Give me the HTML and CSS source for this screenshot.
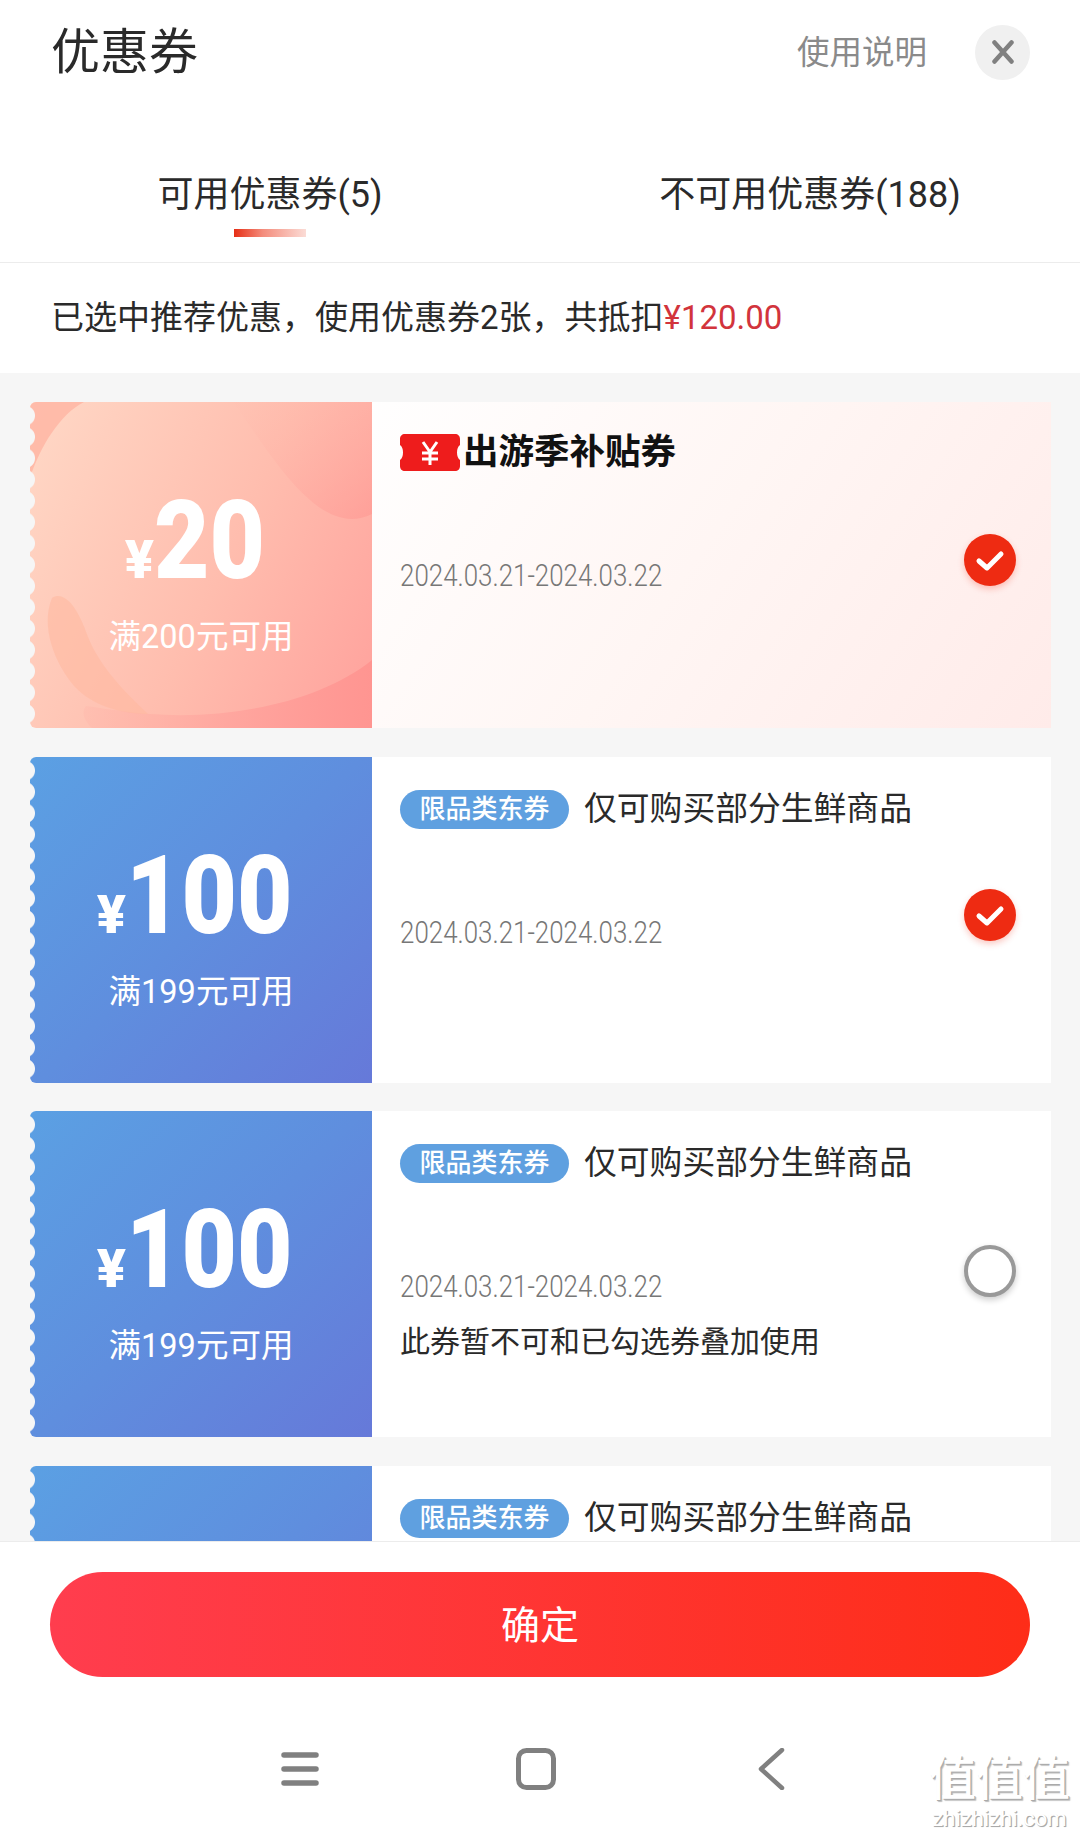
FILE: index.html
```html
<!DOCTYPE html>
<html lang="zh-CN">
<head>
<meta charset="utf-8">
<title>优惠券</title>
<link rel="stylesheet" href="styles.css">
</head>
<body>
<div class="screen">
  <header class="head">
    <div class="head-row">
      <h1 class="title">优惠券</h1>
      <span class="help">使用说明</span>
      <span class="close">
        <svg viewBox="0 0 24 24" width="24" height="24"><path d="M3.500 2.500L20.500 21.500M20.500 2.500L3.500 21.500" fill="none" stroke="#808080" stroke-width="4.500" stroke-linecap="round"/></svg>
      </span>
    </div>
    <div class="tabs">
      <div class="tab">可用优惠券(5)<i class="tab-bar"></i></div>
      <div class="tab">不可用优惠券(188)</div>
    </div>
    <p class="summary">已选中推荐优惠，使用优惠券2张，共抵扣<em class="sum-price">¥120.00</em></p>
  </header>

  <main class="list">
    <article class="coupon coupon-promo">
      <div class="left left-promo">
        <svg class="art" viewBox="0 0 342 326" preserveAspectRatio="none">
          <defs>
            <linearGradient id="swoosh" x1="0" y1="0" x2="1" y2="0">
              <stop offset="0" stop-color="#ffb0a6" stop-opacity=".25"/>
              <stop offset=".5" stop-color="#ff9e99" stop-opacity=".6"/>
              <stop offset="1" stop-color="#ff9591"/>
            </linearGradient>
            <linearGradient id="crest" x1="0" y1="0" x2="1" y2="1">
              <stop offset="0" stop-color="#ffb9ac" stop-opacity=".05"/>
              <stop offset="1" stop-color="#ff8f8b" stop-opacity=".45"/>
            </linearGradient>
          </defs>
          <path d="M0 0H54C30 12 10 45 0 76Z" fill="#ffb6a4" opacity=".85"/>
          <path d="M203 0C225 30 250 72 280 98C296 112 318 124 342 112V0Z" fill="url(#crest)"/>
          <path d="M342 258C290 300 200 318 120 312C95 310 70 306 56 304C50 312 56 320 62 326H342Z" fill="url(#swoosh)"/>
          <path d="M22 196C34 188 48 205 58 235C70 265 95 290 118 312C90 312 62 303 45 285C25 262 10 225 22 196Z" fill="#ffb89e" opacity=".55"/>
        </svg>
        <div class="price"><span class="yen">¥</span><span class="amount">20</span></div>
        <div class="cond">满200元可用</div>
      </div>
      <div class="right">
        <div class="info">
          <div class="brand">
            <svg class="ticket" viewBox="0 0 60 37" width="60" height="37"><path d="M5 0H55C58 0 60 2 60 5V11C56 13 56 24 60 26V32C60 35 58 37 55 37H5C2 37 0 35 0 32V26C4 24 4 13 0 11V5C0 2 2 0 5 0Z" fill="#ee1c1c"/><path d="M23 8L30 18L37 8M22 19H38M22 25H38M30 18V31" fill="none" stroke="#fff" stroke-width="3"/></svg>
            <span class="brand-name">出游季补贴券</span>
          </div>
          <div class="date">2024.03.21-2024.03.22</div>
        </div>
        <span class="check">
          <svg viewBox="0 0 52 52" width="52" height="52"><path d="M15 27L23 34L37 20" fill="none" stroke="#fff" stroke-width="5" stroke-linecap="round" stroke-linejoin="round"/></svg>
        </span>
      </div>
    </article>

    <article class="coupon">
      <div class="left left-blue">
        <div class="price"><span class="yen">¥</span><span class="amount amount-long">100</span></div>
        <div class="cond">满199元可用</div>
      </div>
      <div class="right">
        <div class="info">
          <div class="name-row"><span class="pill">限品类东券</span><span class="name">仅可购买部分生鲜商品</span></div>
          <div class="date">2024.03.21-2024.03.22</div>
        </div>
        <span class="check">
          <svg viewBox="0 0 52 52" width="52" height="52"><path d="M15 27L23 34L37 20" fill="none" stroke="#fff" stroke-width="5" stroke-linecap="round" stroke-linejoin="round"/></svg>
        </span>
      </div>
    </article>

    <article class="coupon">
      <div class="left left-blue">
        <div class="price"><span class="yen">¥</span><span class="amount amount-long">100</span></div>
        <div class="cond">满199元可用</div>
      </div>
      <div class="right">
        <div class="info">
          <div class="name-row"><span class="pill">限品类东券</span><span class="name">仅可购买部分生鲜商品</span></div>
          <div class="date">2024.03.21-2024.03.22</div>
          <div class="notice">此券暂不可和已勾选券叠加使用</div>
        </div>
        <span class="ring"></span>
      </div>
    </article>

    <article class="coupon">
      <div class="left left-blue"></div>
      <div class="right">
        <div class="info">
          <div class="name-row"><span class="pill">限品类东券</span><span class="name">仅可购买部分生鲜商品</span></div>
        </div>
      </div>
    </article>
  </main>

  <footer class="foot">
    <button class="confirm" type="button">确定</button>
    <nav class="nav">
      <svg viewBox="0 0 40 36" width="40" height="36"><path d="M4 4H36M4 18H36M4 32H36" fill="none" stroke="#808080" stroke-width="5.500" stroke-linecap="round"/></svg>
      <svg viewBox="0 0 40 42" width="40" height="42"><rect x="2.500" y="2.500" width="35" height="37" rx="8" fill="none" stroke="#808080" stroke-width="5"/></svg>
      <svg class="nav-back" viewBox="0 0 28 42" width="28" height="42"><path d="M25 2L4 21L25 40" fill="none" stroke="#808080" stroke-width="4.500" stroke-linecap="round" stroke-linejoin="round"/></svg>
    </nav>
  </footer>

  <div class="mark">
    <div class="mark-cn">值值值</div>
    <div class="mark-en">zhizhizhi.com</div>
  </div>
</div>
</body>
</html>
```
FILE: styles.css
```css
* { box-sizing: border-box; }
html, body { margin: 0; padding: 0; background: #fff; }
body { font-family: Roboto, "Noto Sans CJK SC", sans-serif; color: #2a2a2a; }

.screen {
  position: relative;
  width: 1080px;
  height: 1837px;
  display: flex;
  flex-direction: column;
  overflow: hidden;
  background: #fff;
}

/* header */
.head { flex: none; height: 373px; }
.head-row {
  height: 104px;
  padding: 0 50px 0 51px;
  display: flex;
  align-items: center;
}
.title { margin: 0; flex: 1; padding-top: 2px; font-size: 49px; font-weight: 400; line-height: 60px; }
.help { margin-right: 48px; padding-top: 2px; font-size: 32.500px; color: #8a8a8a; line-height: 44px; }
.close {
  width: 55px;
  height: 55px;
  border-radius: 50%;
  background: #f0f0f0;
  display: flex;
  align-items: center;
  justify-content: center;
}

.tabs {
  height: 159px;
  display: flex;
  border-bottom: 1px solid #ececec;
}
.tab {
  flex: 1;
  display: flex;
  flex-direction: column;
  align-items: center;
  padding-top: 61px;
  font-size: 36px;
  line-height: 60px;
}
.tab-bar {
  display: block;
  width: 72px;
  height: 8px;
  margin-top: 4px;
  background: linear-gradient(90deg, #e62f16 0%, #f48c7c 40%, #fbdcd6 100%);
}
.summary {
  margin: 0;
  height: 110px;
  padding-left: 51px;
  font-size: 33px;
  line-height: 110px;
}
.sum-price { font-style: normal; color: #d2343c; }

/* list */
.list {
  flex: 1;
  min-height: 0;
  overflow: hidden;
  background: #f6f6f6;
  padding: 29px 29px 0 30px;
  display: flex;
  flex-direction: column;
  gap: 28.700px;
}
.coupon {
  flex: none;
  height: 326px;
  display: flex;
  background: #fff;
  border-radius: 6px 0 0 6px;
}
.coupon-promo { background: linear-gradient(125deg, #fff 25%, #fff6f4 62%, #ffebe9 100%); }

.left {
  position: relative;
  flex: none;
  width: 342px;
  height: 326px;
  overflow: hidden;
  border-radius: 6px 0 0 6px;
  display: flex;
  flex-direction: column;
  align-items: center;
  color: #fff;
}
.left::before {
  content: "";
  position: absolute;
  z-index: 2;
  left: 0;
  top: 3px;
  bottom: 0;
  width: 5px;
  background: radial-gradient(circle at -5px 50%, #f6f6f6 0, #f6f6f6 9.500px, rgba(246,246,246,0) 10.500px) 0 0 / 5px 21.300px repeat-y;
}
.left-blue { background: linear-gradient(135deg, #5ba0e3 0%, #5f8ede 50%, #6679d9 100%); }
.left-promo { background: linear-gradient(115deg, #ffd8c6 0%, #ffbdae 55%, #ffa19c 100%); }
.art { position: absolute; left: 0; top: 0; width: 100%; height: 100%; }

.price {
  position: relative;
  margin-top: 84px;
  height: 110px;
  display: flex;
  align-items: baseline;
  line-height: 110px;
  font-weight: 900;
}
.yen { font-size: 54px; margin-right: 0; }
.amount {
  font-size: 110px;
  margin-right: -4px;
  transform: scaleX(.87);
  transform-origin: left center;
}
.amount-long { margin-right: -12px; }
.cond { position: relative; margin-top: 19px; font-size: 32.500px; line-height: 44px; }

.right {
  flex: 1;
  display: flex;
  align-items: center;
  padding: 0 35px 0 28px;
  min-width: 0;
}
.info { flex: 1; height: 100%; padding-top: 33px; }
.name-row { height: 39px; display: flex; align-items: center; }
.pill {
  width: 169px;
  height: 39px;
  border-radius: 20px;
  background: #5fa0e0;
  color: #fff;
  font-size: 26px;
  font-weight: 500;
  line-height: 38px;
  text-align: center;
}
.name { margin-left: 15px; font-size: 32.800px; line-height: 39px; }
.brand { height: 39px; margin-top: -2px; margin-bottom: 5px; display: flex; align-items: center; }
.brand-name { margin-left: 3px; font-size: 35.500px; font-weight: 700; color: #111; line-height: 39px; }
.date {
  margin-top: 85px;
  font-size: 32px;
  font-weight: 300;
  line-height: 36px;
  color: #777;
  white-space: nowrap;
  transform: scaleX(.81);
  transform-origin: left center;
}
.notice { margin-top: 20px; font-size: 30px; line-height: 36px; }

.check, .ring {
  flex: none;
  width: 52px;
  height: 52px;
  border-radius: 50%;
}
.check { margin-top: -10px; background: #ee2b12; box-shadow: 0 3px 6px rgba(238,43,18,.25); }
.check svg { display: block; }
.ring { margin-top: -7px; background: #fff; border: 4.500px solid #999; box-shadow: 0 3px 6px rgba(0,0,0,.2); }

/* footer */
.foot {
  flex: none;
  height: 296px;
  background: #fff;
  border-top: 1px solid #ececec;
  position: relative;
  z-index: 1;
  padding: 30px 50px 0;
}
.confirm {
  display: block;
  width: 100%;
  height: 105px;
  padding: 0 0 6px;
  border: 0;
  border-radius: 53px;
  background: linear-gradient(90deg, #ff3d4e 0%, #fe2d18 100%);
  color: #fff;
  font-family: inherit;
  font-size: 39px;
  font-weight: 400;
}
.nav {
  margin-top: 71px;
  padding-right: 15px;
  display: flex;
  justify-content: center;
  align-items: center;
  gap: 196px;
}
.nav-back { margin-left: 5px; }

/* watermark */
.mark {
  position: absolute;
  z-index: 3;
  right: 8px;
  bottom: 5px;
  width: 145px;
  text-align: center;
  color: #fff;
}
.mark-cn {
  font-size: 47px;
  line-height: 54px;
  font-weight: 500;
  text-shadow: 1px 1px 0 #aaa, 2px 2px 1px #bbb;
}
.mark-en {
  font-size: 22px;
  line-height: 26px;
  text-shadow: 1px 1px 0 #aaa, 1px 1px 1px #bbb;
}
```
